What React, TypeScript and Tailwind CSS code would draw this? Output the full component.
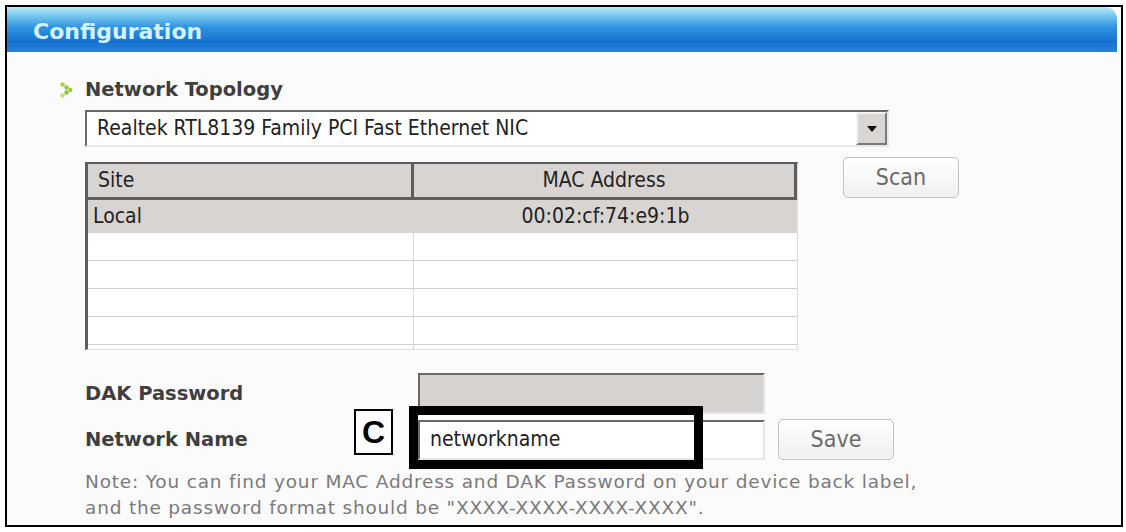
import React from "react";

const UI_FONT = "font-['DejaVu_Sans_Condensed','DejaVu_Sans',sans-serif]";
const BOLD_FONT = "font-['DejaVu_Sans',sans-serif] font-bold";

function Bullet() {
  // little green chevron made of dots
  return (
    <svg width="13" height="16" viewBox="0 0 13 16" className="shrink-0">
      <circle cx="2.5" cy="2.5" r="2.2" fill="#a9d33d" />
      <circle cx="6.5" cy="5.5" r="2.2" fill="#8cc43a" />
      <circle cx="10.3" cy="8" r="2.2" fill="#9bcc3c" />
      <circle cx="6.5" cy="10.5" r="2.2" fill="#8cc43a" />
      <circle cx="2.5" cy="13.5" r="2.2" fill="#c2e070" />
    </svg>
  );
}

function Button({ label }: { label: string }) {
  return (
    <div
      className={`flex h-[41px] w-[116px] items-center justify-center rounded-[5px] border border-[#c4c4c4] bg-[linear-gradient(to_bottom,#ffffff,#f0f0f0)] text-[23px] text-[#6a6a6a] ${UI_FONT}`}
    >
      {label}
    </div>
  );
}

const EMPTY_ROWS = [0, 1, 2, 3];

export default function App() {
  return (
    <div className="relative h-[532px] w-[1126px] overflow-hidden bg-white pl-[5px] pt-[5px]">
      <div className="flex h-[522px] w-[1118px] flex-col border-2 border-black bg-[#fcfbfc]">
        {/* Title bar */}
        <div className="mr-[4px] flex h-[45px] items-center rounded-tl-[3px] rounded-tr-[12px] bg-[linear-gradient(to_bottom,#bfe8f8_0%,#7ccaf1_18%,#2f93e2_45%,#1671d2_78%,#2a84d8_100%)] pl-[26px] pt-[4px]">
          <span className={`text-[22px] leading-none text-[#d4f2ff] ${BOLD_FONT}`}>
            Configuration
          </span>
        </div>

        <div className="flex flex-col pl-[78px]">
          {/* Section heading */}
          <div className="-ml-[25px] mt-[27px] flex h-[22px] items-center gap-[12px]">
            <Bullet />
            <span className={`text-[19.5px] leading-[22px] text-[#3f3f3f] ${BOLD_FONT}`}>
              Network Topology
            </span>
          </div>

          {/* Adapter select */}
          <div className="mt-[9px] flex h-[37px] w-[804px] border-2 border-b-[#e8e8e8] border-l-[#6a6a6a] border-r-[#e8e8e8] border-t-[#6a6a6a] bg-white">
            <div className={`flex flex-1 items-center pl-[10px] text-[21px] text-[#222] ${UI_FONT}`}>
              Realtek RTL8139 Family PCI Fast Ethernet NIC
            </div>
            <div className="flex w-[31px] items-center justify-center border-2 border-b-[#7a7a7a] border-l-[#f4f4f4] border-r-[#7a7a7a] border-t-[#f4f4f4] bg-[#d9d6d4]">
              <svg width="12" height="8" viewBox="0 0 12 8">
                <path d="M1 1h10L6 7z" fill="#111" />
              </svg>
            </div>
          </div>

          {/* Site table + scan */}
          <div className="mt-[10px] flex items-start">
            <div className="mt-[5px] flex h-[188px] w-[713px] flex-col overflow-hidden border-b border-l-[3px] border-r border-t-2 border-b-[#e3e3e3] border-l-[#5d5d5d] border-r-[#dcdcdc] border-t-[#5d5d5d] bg-white">
              <div className={`flex h-[36px] shrink-0 bg-[#d8d4d2] text-[21px] text-[#222] ${UI_FONT}`}>
                <div className="flex w-[326px] items-center border-b-[3px] border-r-[3px] border-[#5d5d5d] pl-[10px]">
                  Site
                </div>
                <div className="flex flex-1 items-center justify-center border-b-[3px] border-r-[3px] border-[#5d5d5d]">
                  MAC Address
                </div>
              </div>
              <div className={`flex h-[33px] shrink-0 bg-[#d8d4d2] text-[21px] text-[#222] ${UI_FONT}`}>
                <div className="flex w-[326px] items-center pl-[5px]">Local</div>
                <div className="flex flex-1 items-center justify-center">00:02:cf:74:e9:1b</div>
              </div>
              {EMPTY_ROWS.map((r) => (
                <div key={r} className="flex h-[28px] shrink-0 border-b border-[#d0d0d0]">
                  <div className="w-[326px] border-r border-[#d8d8d8]" />
                  <div className="flex-1" />
                </div>
              ))}
              <div className="flex flex-1">
                <div className="w-[326px] border-r border-[#d8d8d8]" />
              </div>
            </div>
            <div className="ml-[45px]">
              <Button label="Scan" />
            </div>
          </div>

          {/* DAK password */}
          <div className="mt-[23px] flex items-center">
            <div className={`w-[333px] text-[19.5px] text-[#3f3f3f] ${BOLD_FONT}`}>DAK Password</div>
            <div className="h-[41px] w-[347px] border-2 border-b-[#e6e6e6] border-l-[#6a6a6a] border-r-[#e6e6e6] border-t-[#6a6a6a] bg-[#d6d2d0]" />
          </div>

          {/* Network name */}
          <div className="mt-[5px] flex items-center">
            <div className={`w-[333px] text-[19.5px] text-[#3f3f3f] ${BOLD_FONT}`}>Network Name</div>
            <div className={`flex h-[40px] w-[347px] items-center border-2 border-b-[#e6e6e6] border-l-[#6a6a6a] border-r-[#e6e6e6] border-t-[#6a6a6a] bg-white pl-[10px] text-[21px] text-[#222] ${UI_FONT}`}>
              networkname
            </div>
            <div className="ml-[13px]">
              <Button label="Save" />
            </div>
          </div>

          {/* Note */}
          <p className="mt-[9px] font-['DejaVu_Sans',sans-serif] text-[18.5px] leading-[26px] tracking-[0.8px] text-[#7a7a7a]">
            Note:&nbsp;You can find your MAC Address and DAK Password on your device back label,
            <br />
            and the password format should be "XXXX-XXXX-XXXX-XXXX".
          </p>
        </div>
      </div>

      {/* Callout overlays */}
      <div className="absolute left-[409px] top-[406px] h-[63px] w-[294px] border-[9px] border-black" />
      <div className="absolute left-[354px] top-[409px] flex h-[46px] w-[39px] items-center justify-center border-2 border-black bg-white font-['Liberation_Sans',sans-serif] text-[32px] font-bold leading-none text-black">
        C
      </div>
    </div>
  );
}
